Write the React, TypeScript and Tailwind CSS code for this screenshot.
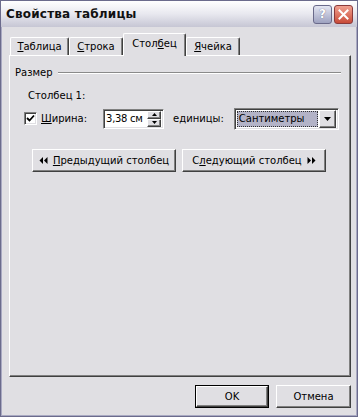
import React from 'react';

const raised =
    'bg-[#e0dfe3] border border-t-white border-l-white border-r-[#404040] border-b-[#404040] shadow-[inset_-1px_-1px_#808080]';
const sunken =
    'bg-white border border-t-[#808080] border-l-[#808080] border-r-white border-b-white shadow-[inset_1px_1px_#404040,inset_-1px_-1px_#e0dfe3]';

const Tri = ({ dir }: { dir: 'left' | 'right' | 'down' }) => {
    if (dir === 'left')
        return (
            <svg width="9" height="7" viewBox="0 0 9 7">
                <polygon points="4,0 0.5,3.5 4,7" fill="#000" />
                <polygon points="8.5,0 5,3.5 8.5,7" fill="#000" />
            </svg>
        );
    if (dir === 'right')
        return (
            <svg width="9" height="7" viewBox="0 0 9 7">
                <polygon points="0.5,0 4,3.5 0.5,7" fill="#000" />
                <polygon points="5,0 8.5,3.5 5,7" fill="#000" />
            </svg>
        );
    return (
        <svg width="7" height="4" viewBox="0 0 7 4">
            <polygon points="0,0 7,0 3.5,4" fill="#000" />
        </svg>
    );
};

const Tab = ({ u, rest, pre = '', active = false, w }: { u: string; rest: string; pre?: string; active?: boolean; w: string }) => (
    <div
        className={
            active
                ? `${w} h-[23px] -mb-px relative z-10 bg-[#e0dfe3] border-t border-l border-r border-t-white border-l-white border-r-[#404040] shadow-[inset_-1px_0_#808080] rounded-t-[2px] flex items-center justify-center pb-[3px]`
                : `${w} h-[18px] bg-[#e0dfe3] border-t border-l border-r border-t-white border-l-white border-r-[#404040] shadow-[inset_-1px_0_#808080] rounded-t-[2px] flex items-center justify-center`
        }
    >
        <span>
            {pre}
            <u>{u}</u>
            {rest}
        </span>
    </div>
);

export default function App() {
    return (
        <div className="w-[358px] h-[417px] bg-[#e0dfe3] border border-[#6b6b8c] flex flex-col font-['DejaVu_Sans',sans-serif] text-[10px] text-black leading-none select-none">
            {/* Title bar */}
            <div className="h-[26px] bg-gradient-to-b from-white via-[#e8e8ef] to-[#c6c6d4] flex items-center justify-between pl-[5px] pr-[4px]">
                <span className="font-bold text-[12px] text-[#111] tracking-[0.2px]">Свойства таблицы</span>
                <div className="flex gap-[2px]">
                    <div className="w-[19px] h-[19px] rounded-[3px] border border-[#6a6a8a] bg-gradient-to-b from-[#e4e6f2] to-[#9ea2c0] flex items-center justify-center text-white font-bold text-[12px] [text-shadow:0_0_1px_#4a4a6a]">
                        ?
                    </div>
                    <div className="w-[19px] h-[19px] rounded-[3px] border border-[#8a3a3a] bg-gradient-to-b from-[#f0a090] to-[#c84a38] flex items-center justify-center">
                        <svg width="11" height="11" viewBox="0 0 11 11">
                            <path d="M1.5 1.5 L9.5 9.5 M9.5 1.5 L1.5 9.5" stroke="#fff" strokeWidth="2" strokeLinecap="square" />
                        </svg>
                    </div>
                </div>
            </div>

            {/* Body */}
            <div className="flex-1 flex flex-col border-x border-b border-[#a9a9c2] pl-[7px] pt-[6px]">
                {/* Tabs */}
                <div className="flex items-end h-[22px] pl-[1px]">
                    <Tab w="w-[59px]" u="Т" rest="аблица" />
                    <Tab w="w-[54px]" u="С" rest="трока" />
                    <Tab w="w-[63px]" pre="Стол" u="б" rest="ец" active />
                    <Tab w="w-[54px]" u="Я" rest="чейка" />
                </div>

                {/* Panel */}
                <div className="w-[342px] h-[322px] border border-t-white border-l-white border-r-[#404040] border-b-[#404040] shadow-[inset_-1px_-1px_#808080] flex flex-col pl-[5px] pr-[9px] pt-[12px]">
                    <div className="flex items-center">
                        <span>Размер</span>
                        <div className="flex-1 ml-[5px] border-t border-b border-t-[#8a8a8a] border-b-white" />
                    </div>

                    <div className="pl-[13px] mt-[13px]">Столбец 1:</div>

                    <div className="flex items-center h-[23px] mt-[6px] pl-[9px]">
                        <div className={`${sunken} w-[13px] h-[13px] flex items-center justify-center`}>
                            <svg width="9" height="9" viewBox="0 0 9 9">
                                <path d="M1 4 L3.5 6.5 L8 1.5" stroke="#000" strokeWidth="1.8" fill="none" />
                            </svg>
                        </div>
                        <span className="ml-[4px]">
                            <u>Ш</u>ирина:
                        </span>
                        <div className={`${sunken} ml-[16px] w-[61px] h-[20px] flex items-center pl-[2px] pr-[2px]`}>
                            <span className="flex-1 whitespace-nowrap tracking-[-0.3px]">3,38 см</span>
                            <div className="flex flex-col">
                                <div className={`${raised} w-[14px] h-[8px] flex items-center justify-center`}>
                                    <svg width="5" height="3" viewBox="0 0 5 3">
                                        <polygon points="0,3 2.5,0 5,3" fill="#000" />
                                    </svg>
                                </div>
                                <div className={`${raised} w-[14px] h-[8px] flex items-center justify-center`}>
                                    <svg width="5" height="3" viewBox="0 0 5 3">
                                        <polygon points="0,0 5,0 2.5,3" fill="#000" />
                                    </svg>
                                </div>
                            </div>
                        </div>
                        <span className="ml-[9px]">
                            е<u>д</u>иницы:
                        </span>
                        <div className={`${sunken} ml-[10px] w-[105px] h-[22px] flex items-center pl-[2px] pr-[2px]`}>
                            <div className="flex-1 h-[16px] bg-[#b3b3c7] outline outline-1 outline-dotted outline-[#333] -outline-offset-1 flex items-center pl-[2px] whitespace-nowrap">
                                Сантиметры
                            </div>
                            <div className={`${raised} w-[17px] h-[18px] ml-[1px] flex items-center justify-center`}>
                                <Tri dir="down" />
                            </div>
                        </div>
                    </div>

                    <div className="flex mt-[19px] pl-[17px] gap-[6px]">
                        <div className={`${raised} w-[144px] h-[23px] flex items-center justify-center gap-[5px]`}>
                            <Tri dir="left" />
                            <span>
                                <u>П</u>редыдущий столбец
                            </span>
                        </div>
                        <div className={`${raised} w-[144px] h-[23px] flex items-center justify-center gap-[5px]`}>
                            <span>
                                С<u>л</u>едующий столбец
                            </span>
                            <Tri dir="right" />
                        </div>
                    </div>
                </div>

                {/* Footer buttons */}
                <div className="flex justify-end w-[342px] mt-[8px] gap-[7px]">
                    <div className="w-[74px] h-[23px] border border-black">
                        <div className={`${raised} w-full h-full flex items-center justify-center`}>OK</div>
                    </div>
                    <div className={`${raised} w-[75px] h-[23px] flex items-center justify-center`}>Отмена</div>
                </div>
            </div>
        </div>
    );
}
